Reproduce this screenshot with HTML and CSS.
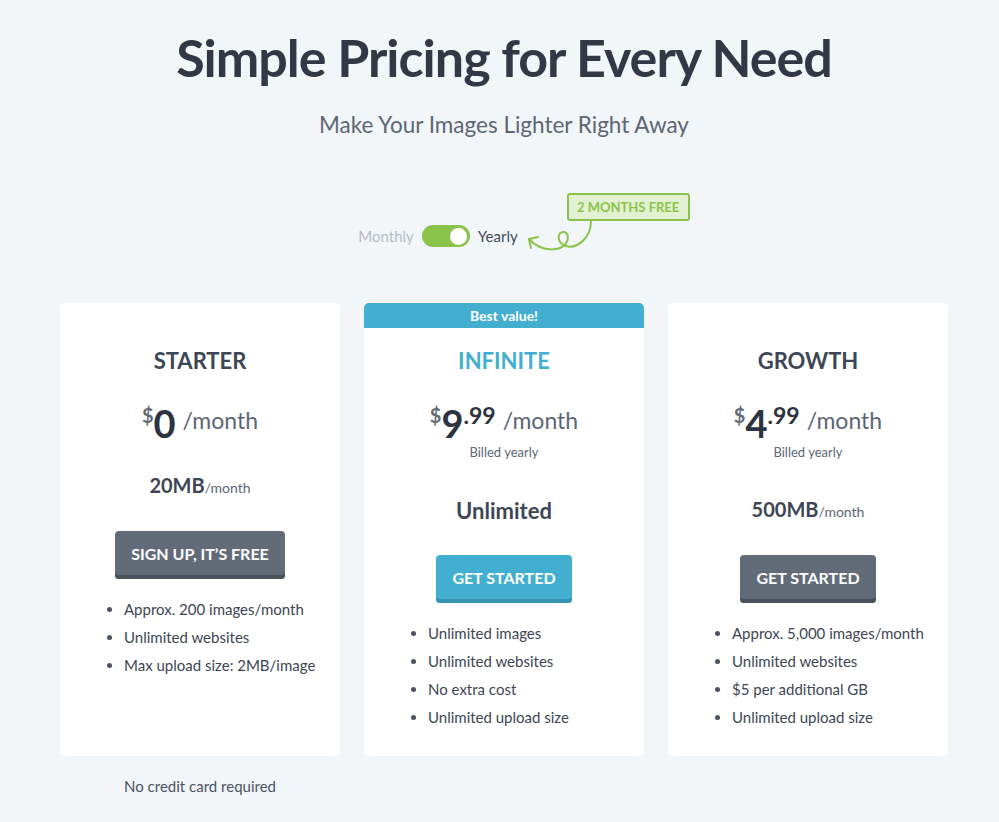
FILE: index.html
```html
<!DOCTYPE html>
<html>
<head>
<meta charset="utf-8">
<link rel="stylesheet" href="styles.css">
</head>
<body>
<main class="page">
  <h1 class="title">Simple Pricing for Every Need</h1>
  <p class="subtitle">Make Your Images Lighter Right Away</p>

  <div class="billing">
    <div class="toggle-group">
      <span class="opt opt-off">Monthly</span>
      <span class="switch"><span class="knob"></span></span>
      <span class="opt opt-on">Yearly</span>
    </div>
    <div class="annotation">
      <span class="badge">2 MONTHS FREE</span>
      <svg class="curl" width="167" height="62" viewBox="0 0 167 62" fill="none" stroke="#8bc34a" stroke-width="2" stroke-linecap="round" stroke-linejoin="round">
        <path d="M68 29 C68 47 53 57 43 54 C33 51 34 39 41 40 C48 41 46 55 33 57 C21 59 11 53 6 47"/>
        <path d="M6 47 L15 45 M6 47 L8 56"/>
      </svg>
    </div>
  </div>

  <section class="plans">
    <div class="plan-col">
      <article class="card">
        <h2 class="plan-name">STARTER</h2>
        <div class="price"><span class="cur">$</span><span class="amt">0</span><span class="per">/month</span></div>
        <div class="quota"><b>20MB</b><span>/month</span></div>
        <a class="btn btn-gray">SIGN UP, IT’S FREE</a>
        <ul class="features">
          <li>Approx. 200 images/month</li>
          <li>Unlimited websites</li>
          <li>Max upload size: 2MB/image</li>
        </ul>
      </article>
      <p class="note">No credit card required</p>
    </div>

    <div class="plan-col">
      <article class="card card-featured">
        <div class="ribbon">Best value!</div>
        <h2 class="plan-name plan-blue">INFINITE</h2>
        <div class="price"><span class="cur">$</span><span class="amt">9</span><span class="cents">.99</span><span class="per">/month</span></div>
        <div class="billed">Billed yearly</div>
        <div class="quota quota-big"><b>Unlimited</b></div>
        <a class="btn btn-blue">GET STARTED</a>
        <ul class="features">
          <li>Unlimited images</li>
          <li>Unlimited websites</li>
          <li>No extra cost</li>
          <li>Unlimited upload size</li>
        </ul>
      </article>
    </div>

    <div class="plan-col">
      <article class="card">
        <h2 class="plan-name">GROWTH</h2>
        <div class="price"><span class="cur">$</span><span class="amt">4</span><span class="cents">.99</span><span class="per">/month</span></div>
        <div class="billed">Billed yearly</div>
        <div class="quota"><b>500MB</b><span>/month</span></div>
        <a class="btn btn-gray">GET STARTED</a>
        <ul class="features">
          <li>Approx. 5,000 images/month</li>
          <li>Unlimited websites</li>
          <li>$5 per additional GB</li>
          <li>Unlimited upload size</li>
        </ul>
      </article>
    </div>
  </section>
</main>
</body>
</html>
```

FILE: styles.css
```css
* { box-sizing: border-box; }
html, body {
  margin: 0;
  background: #f3f6f9;
}
body {
  font-family: "Lato", "Liberation Sans", sans-serif;
  color: #3d4654;
}
.page {
  width: 888px;
  margin-left: 60px;
  padding-top: 21px;
}
.title {
  margin: 0;
  text-align: center;
  font-family: "Lato", sans-serif;
  font-weight: 700;
  font-size: 52px;
  line-height: 72px;
  color: #333847;
  letter-spacing: -1px;
}
.subtitle {
  margin: 17px 0 0;
  text-align: center;
  font-size: 22.5px;
  line-height: 30px;
  color: #5c6675;
}
.billing {
  display: flex;
  justify-content: center;
  align-items: flex-end;
  padding-left: 40px;
  margin-top: 52px;
}
.toggle-group {
  display: flex;
  align-items: center;
  gap: 8px;
  height: 22px;
  margin-bottom: 7px;
}
.opt { font-size: 15px; }
.opt-off { color: #b6bcc5; }
.opt-on { color: #3d4a5c; }
.switch {
  width: 48px;
  height: 22px;
  border-radius: 11px;
  background: #8bc34a;
  display: flex;
  align-items: center;
  justify-content: flex-end;
  padding-right: 3px;
}
.knob {
  width: 17px;
  height: 17px;
  border-radius: 50%;
  background: #fff;
}
.annotation {
  position: relative;
  width: 167px;
  height: 62px;
  margin-left: 5px;
}
.badge {
  position: absolute;
  right: 0;
  top: 1px;
  width: 123px;
  height: 28px;
  border: 2px solid #8bc34a;
  border-radius: 3px;
  background: #e3f1d3;
  color: #8bc34a;
  font-weight: 700;
  font-size: 13px;
  display: flex;
  align-items: center;
  justify-content: center;
}
.curl {
  position: absolute;
  left: 0;
  top: 0;
}
.plans {
  display: grid;
  grid-template-columns: repeat(3, 280px);
  gap: 24px;
  margin-top: 49px;
}
.card {
  background: #fff;
  border-radius: 5px;
  height: 453px;
  display: flex;
  flex-direction: column;
  align-items: center;
  padding-top: 44px;
}
.card-featured { padding-top: 0; overflow: hidden; }
.ribbon {
  align-self: stretch;
  height: 25px;
  background: #42afd0;
  color: #fff;
  font-weight: 700;
  font-size: 14px;
  display: flex;
  align-items: center;
  justify-content: center;
  margin-bottom: 19px;
}
.plan-name {
  margin: 0;
  font-size: 22px;
  line-height: 28px;
  font-weight: 700;
  color: #3d4654;
}
.plan-blue { color: #42afd0; }
.price {
  margin-top: 28px;
  height: 40px;
  display: flex;
  align-items: flex-start;
  color: #5c6675;
}
.cur {
  font-size: 20px;
  font-weight: 700;
  color: #626b78;
  line-height: 20px;
  margin-top: 2px;
}
.amt {
  font-size: 38px;
  font-weight: 700;
  color: #2d3340;
  line-height: 40px;
}
.cents {
  font-size: 23px;
  font-weight: 700;
  color: #2d3340;
  line-height: 23px;
  margin-top: 1px;
}
.per {
  font-size: 23px;
  line-height: 26px;
  margin-top: 4px;
  margin-left: 7px;
  color: #5c6675;
}
.billed {
  font-size: 13px;
  line-height: 16px;
  color: #5c6675;
  margin-top: 1px;
}
.quota {
  margin-top: 30px;
  height: 28px;
  display: flex;
  align-items: baseline;
}
.billed + .quota { margin-top: 37px; }
.quota b { font-size: 20px; color: #3d4654; }
.quota span { font-size: 14px; color: #5c6675; }
.quota-big b { font-size: 22px; }
.btn {
  margin-top: 30px;
  height: 48px;
  padding: 0 16px 4px;
  border-radius: 4px;
  color: #fff;
  font-weight: 700;
  font-size: 16px;
  display: flex;
  align-items: center;
  justify-content: center;
}
.btn-gray { background: #626b78; box-shadow: inset 0 -4px 0 #4b525d; }
.btn-blue { background: #42afd0; box-shadow: inset 0 -4px 0 #3795b1; }
.features {
  align-self: stretch;
  margin: 16px 0 0;
  padding-left: 64px;
  font-size: 15px;
  line-height: 28px;
  color: #3d4654;
}
.features li::marker { color: #4b5362; }
.note {
  margin: 21px 0 0;
  text-align: center;
  font-size: 15px;
  color: #4b5362;
}
```
